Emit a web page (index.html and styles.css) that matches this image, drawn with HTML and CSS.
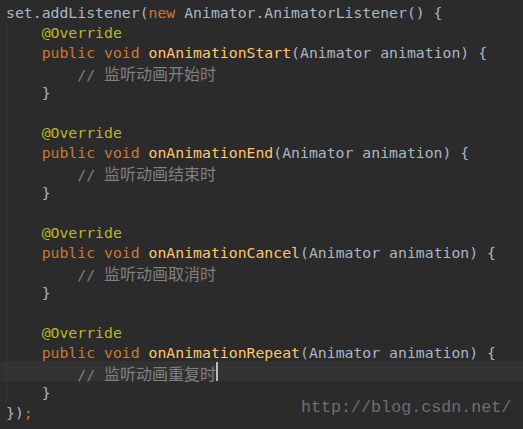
FILE: index.html
```html
<!DOCTYPE html>
<html>
<head>
<meta charset="utf-8">
<link rel="stylesheet" href="styles.css">
</head>
<body>
<div class="editor">
  <div class="line"><span class="t">set.addListener(</span><span class="k">new </span><span class="t">Animator.AnimatorListener() {</span></div>
  <div class="block">
    <div class="line">    <span class="a">@Override</span></div>
    <div class="line">    <span class="k">public void </span><span class="m">onAnimationStart</span><span class="t">(Animator animation) {</span></div>
    <div class="line">        <span class="c">// <span class="cjk">监听动画开始时</span></span></div>
    <div class="line">    <span class="t">}</span></div>
    <div class="line"> </div>
    <div class="line">    <span class="a">@Override</span></div>
    <div class="line">    <span class="k">public void </span><span class="m">onAnimationEnd</span><span class="t">(Animator animation) {</span></div>
    <div class="line">        <span class="c">// <span class="cjk">监听动画结束时</span></span></div>
    <div class="line">    <span class="t">}</span></div>
    <div class="line"> </div>
    <div class="line">    <span class="a">@Override</span></div>
    <div class="line">    <span class="k">public void </span><span class="m">onAnimationCancel</span><span class="t">(Animator animation) {</span></div>
    <div class="line">        <span class="c">// <span class="cjk">监听动画取消时</span></span></div>
    <div class="line">    <span class="t">}</span></div>
    <div class="line"> </div>
    <div class="line">    <span class="a">@Override</span></div>
    <div class="line">    <span class="k">public void </span><span class="m">onAnimationRepeat</span><span class="t">(Animator animation) {</span></div>
    <div class="line current">        <span class="c">// <span class="cjk">监听动画重复时</span></span><span class="caret"></span></div>
    <div class="line">    <span class="t">}</span></div>
  </div>
  <div class="line"><span class="t">})</span><span class="k">;</span></div>
  <div class="watermark">http://blog.csdn.net/</div>
</div>
</body>
</html>
```
FILE: styles.css
```css
html, body {
  margin: 0;
  padding: 0;
  background: #2b2b2b;
}
.editor {
  position: relative;
  width: 523px;
  height: 429px;
  overflow: hidden;
  padding-top: 3px;
  box-sizing: border-box;
  background: #2b2b2b;
  font-family: "DejaVu Sans Mono", "Noto Sans CJK SC", monospace;
  font-size: 14.8px;
  color: #a9b7c6;
}
.line {
  height: 20px;
  line-height: 20px;
  padding-left: 6px;
  white-space: pre;
}
.block {
  background-image: linear-gradient(#373737, #373737);
  background-size: 1px 100%;
  background-position: 6px 0;
  background-repeat: no-repeat;
}
.block .current {
  background-image: linear-gradient(#383838, #383838), linear-gradient(#323232, #323232);
  background-size: 1px 100%, 100% 18px;
  background-position: 6px 0, 0 0;
  background-repeat: no-repeat;
  box-shadow: 0 -2px 0 #323232;
}
.t { color: #a9b7c6; }
.k { color: #cc7832; }
.a { color: #bbb529; }
.m { color: #ffc66d; }
.c { color: #808080; }
.cjk {
  font-family: "Noto Sans CJK SC", sans-serif;
  font-size: 16px;
  line-height: 20px;
}
.caret {
  display: inline-block;
  position: relative;
  top: -1px;
  width: 2px;
  height: 19px;
  background: #bbbbbb;
  vertical-align: top;
}
.watermark {
  position: absolute;
  left: 301px;
  top: 397px;
  font-family: "Liberation Mono", monospace;
  font-size: 16.7px;
  line-height: 22px;
  color: #6e6e6e;
}
```
